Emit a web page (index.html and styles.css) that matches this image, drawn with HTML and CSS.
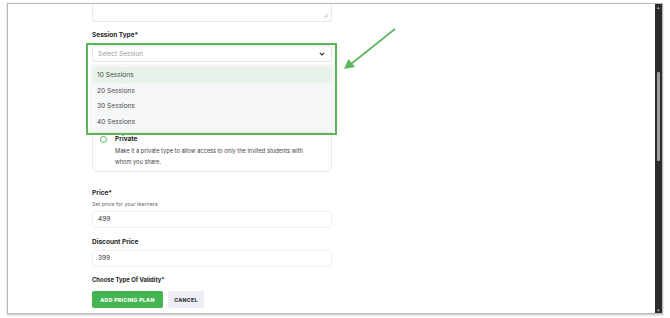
FILE: index.html
```html
<!DOCTYPE html>
<html>
<head>
<meta charset="utf-8">
<link rel="stylesheet" href="styles.css">
</head>
<body>
<div class="frame">
  <div class="main">
    <div class="textarea">
      <svg class="grip" width="5" height="5" viewBox="0 0 5 5"><path d="M4.5 1 L1 4.5 M4.5 3 L3 4.5" stroke="#9a9a9a" stroke-width="0.7"/></svg>
    </div>

    <div class="label first">Session Type*</div>
    <div class="session">
      <div class="select">
        <span>Select Session</span>
        <svg class="chev" width="6" height="4" viewBox="0 0 6 4"><path d="M0.8 0.8 L3 3 L5.2 0.8" fill="none" stroke="#333" stroke-width="1.1"/></svg>
      </div>
      <div class="card">
        <div class="opt-spacer"></div>
        <div class="opt">
          <span class="radio"></span>
          <div class="opt-text">
            <div class="opt-title">Private</div>
            <div class="opt-desc">Make it a private type to allow access to only the invited students with whom you share.</div>
          </div>
        </div>
      </div>
      <ul class="dropdown">
        <li class="active">10 Sessions</li>
        <li>20 Sessions</li>
        <li>30 Sessions</li>
        <li>40 Sessions</li>
      </ul>
      <div class="highlight"></div>
    </div>

    <div class="label price">Price*</div>
    <div class="hint">Set price for your learners</div>
    <div class="input">499</div>

    <div class="label disc">Discount Price</div>
    <div class="input">399</div>

    <div class="label validity">Choose Type Of Validity*</div>
    <div class="actions">
      <button class="btn primary">ADD PRICING PLAN</button>
      <button class="btn secondary">CANCEL</button>
    </div>
  </div>
  <div class="scrollbar">
    <span class="sb-arrow">&#9652;</span>
    <div class="sb-track"><div class="sb-thumb"></div></div>
    <span class="sb-arrow">&#9662;</span>
  </div>
</div>
<svg class="pointer" width="60" height="46" viewBox="0 0 60 46">
  <path d="M55 2 L11 37" stroke="#5bb85a" stroke-width="1.6" fill="none"/>
  <path d="M4 42 L8.5 32 L15 40 Z" fill="#5bb85a"/>
</svg>
</body>
</html>
```
FILE: styles.css
```css
* { box-sizing: border-box; }
html, body { margin: 0; padding: 0; }
body {
  width: 670px;
  height: 318px;
  overflow: hidden;
  background: #ffffff;
  font-family: "Inter", "Noto Sans", sans-serif;
  color: #222;
  position: relative;
}
.frame {
  margin: 3px 0 0 7px;
  width: 656px;
  height: 311px;
  border: 1px solid #b9b9b9;
  box-shadow: 0 1px 2px rgba(0,0,0,0.25);
  display: flex;
  overflow: hidden;
  background: #fff;
}
.main {
  flex: 1;
  padding-left: 84px;
  display: flex;
  flex-direction: column;
  align-items: flex-start;
}
.main > * { width: 240px; }
.textarea {
  height: 18px;
  border: 1px solid #e8e8e8;
  border-top: none;
  border-radius: 0 0 3px 3px;
  display: flex;
  justify-content: flex-end;
  align-items: flex-end;
  padding: 0 3px 3px 0;
}
.grip { display: block; }
.label {
  font-size: 6.5px;
  font-weight: 700;
  line-height: 10px;
  color: #1d1d1d;
}
.label.first { margin-top: 8px; }
.session {
  position: relative;
  margin-top: 5px;
}
.select {
  height: 17px;
  border: 1px solid #e4e4e4;
  border-radius: 3px;
  background: #fff;
  display: flex;
  align-items: center;
  justify-content: space-between;
  padding: 0 6px 0 5px;
  font-size: 6.5px;
  color: #9b9b9b;
}
.chev { display: block; }
.card {
  margin-top: 6px;
  border: 1px solid #ececec;
  border-radius: 4px;
  padding: 10px 8px 4px 7px;
  display: flex;
  flex-direction: column;
  gap: 22px;
}
.opt-spacer { height: 33px; }
.opt {
  display: flex;
  align-items: flex-start;
  gap: 8px;
}
.radio {
  width: 7px;
  height: 7px;
  margin-top: 1.5px;
  border: 1.3px solid #58b556;
  border-radius: 50%;
  flex: none;
}
.opt-title {
  font-size: 6.5px;
  font-weight: 700;
  line-height: 10px;
  color: #1d1d1d;
}
.opt-desc {
  margin-top: 1px;
  font-size: 5.7px;
  line-height: 11px;
  color: #444;
  width: 205px;
}
.dropdown {
  position: absolute;
  top: 19px;
  left: -1px;
  width: 242px;
  height: 68px;
  margin: 0;
  padding: 3px 1px 0;
  list-style: none;
  background: #f6f7f9;
  box-shadow: 0 1px 2px rgba(0,0,0,0.12);
}
.dropdown li {
  height: 15.7px;
  line-height: 16px;
  padding-left: 5px;
  font-size: 6.6px;
  color: #4a4a4a;
}
.dropdown li.active { background: #e7f2e8; }
.highlight {
  position: absolute;
  top: -2px;
  left: -6px;
  width: 251px;
  height: 92px;
  border: 2px solid #5bb556;
  pointer-events: none;
}
.label.price { margin-top: 16px; }
.hint {
  font-size: 5.3px;
  line-height: 8px;
  margin-top: 2px;
  color: #666;
}
.input {
  height: 17px;
  margin-top: 3px;
  border: 1px solid #efefef;
  border-radius: 3px;
  padding-left: 5px;
  font-size: 6.5px;
  line-height: 15px;
  color: #333;
}
.label.disc { margin-top: 9px; }
.label.validity { margin-top: 8px; font-size: 5.9px; }
.actions {
  margin-top: 6px;
  display: flex;
  gap: 5px;
}
.btn {
  height: 17px;
  border: none;
  border-radius: 2px;
  font-family: inherit;
  font-size: 5.2px;
  font-weight: 800;
  letter-spacing: 0.3px;
  padding: 0;
  cursor: pointer;
}
.btn.primary { width: 71px; background: #45b552; color: #fff; }
.btn.secondary { width: 36px; background: #eceef4; color: #333; }
.scrollbar {
  width: 7px;
  background: #2c2c2c;
  display: flex;
  flex-direction: column;
  align-items: center;
}
.sb-arrow {
  font-size: 5px;
  line-height: 6px;
  color: #aaa;
}
.sb-track {
  flex: 1;
  width: 100%;
  padding-top: 62px;
  display: flex;
  justify-content: center;
}
.sb-thumb {
  width: 3px;
  height: 89px;
  background: #9c9c9c;
  border-radius: 1px;
}
.pointer {
  position: absolute;
  left: 340px;
  top: 27px;
}
```
